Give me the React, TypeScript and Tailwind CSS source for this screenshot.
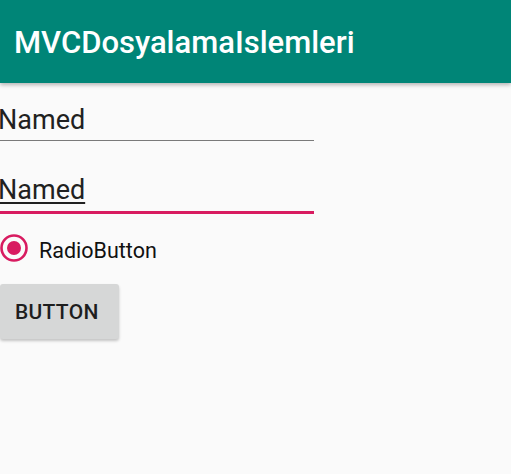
import React from "react";

export default function App() {
  return (
    <div
      className="w-[511px] h-[474px] bg-[#fafafa] overflow-hidden flex flex-col"
      style={{ fontFamily: "Roboto, 'Noto Sans', sans-serif" }}
    >
      <div className="relative z-10 h-[83px] shrink-0 bg-[#008577] flex items-center pl-[14px] shadow-[0_2px_4px_rgba(0,0,0,0.28)]">
        <span className="text-white text-[31px] font-medium leading-[36px] pt-[2px]">
          MVCDosyalamaIslemleri
        </span>
      </div>

      <div className="flex flex-col">
        <div className="mt-[22px] w-[314px] pb-[5px] border-b border-[#7a7a7a]">
          <div className="-ml-[2px] text-[27px] leading-[30px] text-[#212121]">Named</div>
        </div>

        <div className="mt-[34px] w-[314px] pb-[6px] border-b-[3px] border-[#d81b60]">
          <div className="-ml-[2px] text-[27px] leading-[30px] text-[#212121]">
            <span className="underline decoration-[2px] underline-offset-[3px]">Named</span>
          </div>
        </div>

        <div className="mt-[20px] h-[30px] flex items-center">
          <svg width="30" height="30" viewBox="0 0 30 30" className="-ml-[1px] shrink-0">
            <circle cx="15" cy="14" r="12.5" fill="none" stroke="#d81b60" strokeWidth="2.6" />
            <circle cx="15" cy="14" r="7" fill="#d81b60" />
          </svg>
          <span className="ml-[10px] pt-[3px] text-[21.5px] leading-[30px] text-[#111111]">
            RadioButton
          </span>
        </div>

        <div className="mt-[20px] w-[119px] h-[55px] rounded-[3px] bg-[#d6d7d7] shadow-[0_2px_3px_rgba(0,0,0,0.22)] flex items-center pl-[15px]">
          <span className="text-[21px] font-medium leading-[24px] text-[#1e1e1e] tracking-[0.3px]">
            BUTTON
          </span>
        </div>
      </div>
    </div>
  );
}
